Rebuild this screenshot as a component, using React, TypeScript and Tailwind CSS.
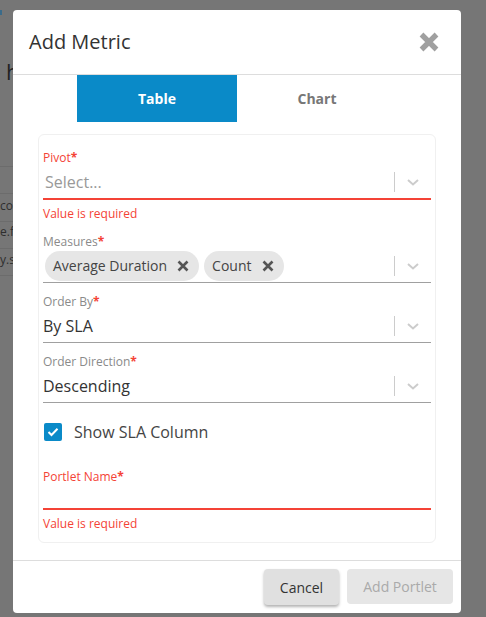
import React from "react";

const font = { fontFamily: '"Open Sans", "Noto Sans", sans-serif' };

function Chevron() {
  return (
    <svg width="14" height="9" viewBox="0 0 14 9" className="block">
      <path d="M2 2 L7 6.5 L12 2" fill="none" stroke="#cccccc" strokeWidth="2" />
    </svg>
  );
}

function Indicator() {
  return (
    <div className="flex items-center h-full">
      <div className="w-px h-[20px] bg-[#cccccc]" />
      <div className="w-[36px] flex justify-center">
        <Chevron />
      </div>
    </div>
  );
}

function XIcon({ size, color, sw }: { size: number; color: string; sw: number }) {
  return (
    <svg width={size} height={size} viewBox="0 0 12 12" className="block">
      <path d="M1.5 1.5 L10.5 10.5 M10.5 1.5 L1.5 10.5" stroke={color} strokeWidth={sw} strokeLinecap="butt" />
    </svg>
  );
}

function Label({ text, error }: { text: string; error?: boolean }) {
  return (
    <div className={`text-[12px] leading-[16px] ${error ? "text-[#f44336]" : "text-[#8a8a8a]"}`}>
      {text}
      <span className="text-[#f44336] font-bold">*</span>
    </div>
  );
}

function Chip({ text }: { text: string }) {
  return (
    <div className="flex items-center h-[30px] rounded-full bg-[#e6e6e6] pl-[8px] pr-[10px]">
      <span className="text-[14px] text-[#444444] leading-none">{text}</span>
      <span className="ml-[10px]">
        <XIcon size={12} color="#555555" sw={2.6} />
      </span>
    </div>
  );
}

export default function App() {
  return (
    <div className="relative w-[486px] h-[617px] bg-[#767676] overflow-hidden" style={font}>
      {/* dimmed page behind the modal */}
      <div className="absolute inset-0 pointer-events-none">
        <div className="absolute left-0 top-[10px] w-[2px] h-[5px] bg-[#3a6b8a]" />
        <div className="absolute left-[6px] top-[60px] text-[22px] text-[#222222] leading-none">h</div>
        <div className="absolute left-0 top-[166px] w-[13px] h-px bg-[#6c6c6c]" />
        <div className="absolute left-0 top-[193px] w-[13px] h-px bg-[#6c6c6c]" />
        <div className="absolute left-0 top-[221px] w-[13px] h-px bg-[#6c6c6c]" />
        <div className="absolute left-0 top-[248px] w-[13px] h-px bg-[#6c6c6c]" />
        <div className="absolute left-0 top-[275px] w-[13px] h-px bg-[#6c6c6c]" />
        <div className="absolute left-0 top-[200px] text-[12px] leading-none text-[#2e2e2e]">co</div>
        <div className="absolute left-0 top-[226px] text-[12px] leading-none text-[#2e2e2e]">e.f</div>
        <div className="absolute left-0 top-[254px] text-[12px] leading-none text-[#2e2e2e]">y.s</div>
      </div>

      <div className="relative ml-[13px] mt-[10px] w-[448px] h-[603px] bg-white rounded-[4px] flex flex-col">
        {/* header */}
        <div className="h-[64px] flex items-center justify-between pl-[16px] pr-[22px] border-b border-[#dddddd] box-content">
          <span className="text-[20px] text-[#333333] leading-none">Add Metric</span>
          <XIcon size={20} color="#a0a0a0" sw={3.2} />
        </div>

        {/* tabs */}
        <div className="flex justify-center">
          <div className="w-[160px] h-[47px] bg-[#0a8ac8] flex items-center justify-center text-white font-bold text-[14px]">
            Table
          </div>
          <div className="w-[160px] h-[47px] flex items-center justify-center text-[#777777] font-bold text-[14px]">
            Chart
          </div>
        </div>

        {/* form card */}
        <div className="mx-[25px] mt-[12px] h-[409px] border border-[#f0f0f0] rounded-[6px] px-[4px] pt-[15px]">
          {/* Pivot */}
          <Label text="Pivot" error />
          <div className="h-[32px] flex items-center border-b-2 border-[#f44336] box-content">
            <span className="flex-1 pl-[2px] text-[16px] text-[#999999]">Select...</span>
            <Indicator />
          </div>
          <div className="mt-[6px] text-[12px] leading-[16px] text-[#f44336]">Value is required</div>

          {/* Measures */}
          <div className="mt-[12px]">
            <Label text="Measures" />
          </div>
          <div className="h-[32px] flex items-center border-b border-[#a0a0a0] box-content">
            <div className="flex-1 flex gap-[5px] pl-[2px]">
              <Chip text="Average Duration" />
              <Chip text="Count" />
            </div>
            <Indicator />
          </div>

          {/* Order By */}
          <div className="mt-[11px]">
            <Label text="Order By" />
          </div>
          <div className="h-[32px] flex items-center border-b border-[#a0a0a0] box-content">
            <span className="flex-1 text-[16px] text-[#333333]">By SLA</span>
            <Indicator />
          </div>

          {/* Order Direction */}
          <div className="mt-[11px]">
            <Label text="Order Direction" />
          </div>
          <div className="h-[32px] flex items-center border-b border-[#a0a0a0] box-content">
            <span className="flex-1 text-[16px] text-[#333333]">Descending</span>
            <Indicator />
          </div>

          {/* Checkbox */}
          <div className="h-[58px] flex items-center">
            <div className="ml-[1px] w-[18px] h-[18px] rounded-[2px] bg-[#0a8ac8] flex items-center justify-center">
              <svg width="12" height="10" viewBox="0 0 12 10">
                <path d="M1.5 5 L4.5 8 L10.5 1.8" fill="none" stroke="white" strokeWidth="2" />
              </svg>
            </div>
            <span className="ml-[12px] text-[16px] text-[#444444]">Show SLA Column</span>
          </div>

          {/* Portlet Name */}
          <div className="mt-[8px]">
            <Label text="Portlet Name" error />
          </div>
          <div className="h-[23px] border-b-2 border-[#f44336] box-content" />
          <div className="mt-[6px] text-[12px] leading-[16px] text-[#f44336]">Value is required</div>
        </div>

        {/* footer */}
        <div className="mt-[17px] border-t border-[#dddddd] flex justify-end items-start gap-[8px] pt-[8px] pr-[8px] flex-1">
          <button className="w-[75px] h-[36px] rounded-[4px] bg-[#e0e0e0] text-[14px] text-[#333333] shadow-[0_2px_3px_rgba(0,0,0,0.3)]">
            Cancel
          </button>
          <button className="w-[106px] h-[35px] rounded-[4px] bg-[#e6e6e6] text-[14px] text-[#aaaaaa]">
            Add Portlet
          </button>
        </div>
      </div>
    </div>
  );
}
